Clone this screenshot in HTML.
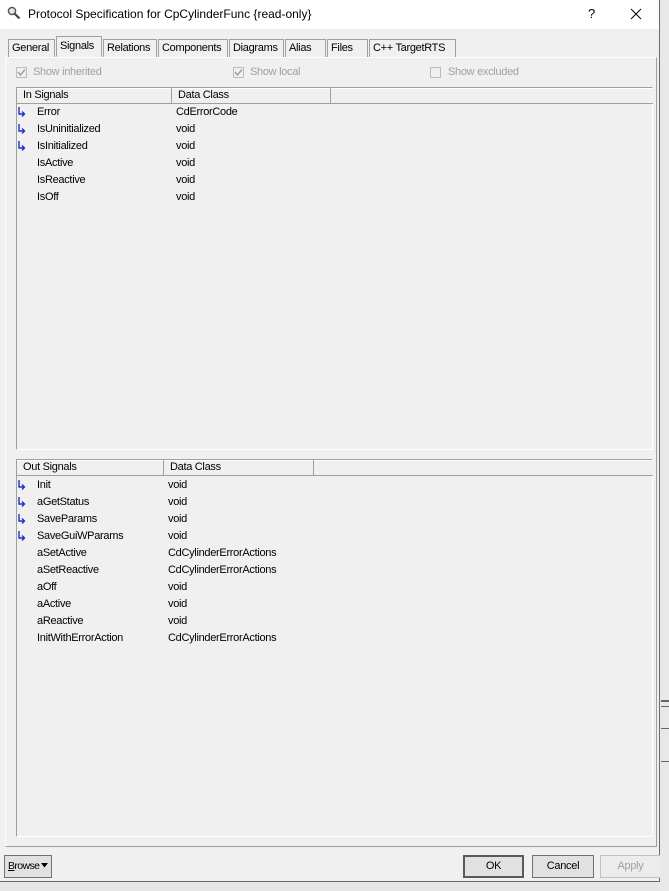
<!DOCTYPE html>
<html><head><style>
*{margin:0;padding:0;box-sizing:border-box}
html,body{width:669px;height:891px;overflow:hidden}
body{background:#e6e6e6;position:relative;font-family:"Liberation Sans",sans-serif;font-size:11px;color:#000;letter-spacing:-0.3px}
.a{position:absolute;white-space:nowrap}
#dlg{left:0;top:0;width:660px;height:882px;background:#f0f0f0;border-right:1px solid #6a6a6a;border-bottom:1px solid #6a6a6a}
#title{left:0;top:0;width:659px;height:29px;background:#fff}
.tab{position:absolute;top:39px;height:18px;border:1px solid #a0a0a0;border-bottom:none;background:#f0f0f0;padding:2px 3px 0;white-space:nowrap}
.list{position:absolute;left:16px;width:637px;border:1px solid #a0a0a0;border-right-color:#fff;border-bottom-color:#fff;background:#f0f0f0}
.hdr{position:absolute;top:0;height:16px;border-right:1px solid #a0a0a0;border-bottom:1px solid #a0a0a0;padding:1px 0 0 6px;background:#f0f0f0;box-shadow:inset 0 1px #fff}
.btn{position:absolute;top:855px;height:23px;border:1px solid #707070;background:#e1e1e1;text-align:center;line-height:21px;font-size:11px;white-space:nowrap}
.cb{position:absolute;top:67px;width:11px;height:11px;border:1px solid #bcbcbc;background:#f0f0f0}
.cbl{position:absolute;top:66px;color:#a0a0a0}
</style></head><body>
<div class="a" style="left:660px;top:0;width:9px;height:891px;background:#e8e8e8"></div>
<div class="a" style="left:661px;top:700px;width:8px;height:2px;background:#666"></div>
<div class="a" style="left:661px;top:706px;width:8px;height:1px;background:#666"></div>
<div class="a" style="left:661px;top:728px;width:8px;height:1px;background:#666"></div>
<div class="a" style="left:661px;top:761px;width:8px;height:1px;background:#666"></div>
<div class="a" id="dlg"></div>
<div class="a" id="title"></div>
<svg class="a" style="left:7px;top:6px" width="14" height="14" viewBox="0 0 14 14"><circle cx="5" cy="5" r="3.6" fill="#dfe8ef" stroke="#555" stroke-width="1.4"/><path d="M7.5 7.5L12.5 12.5" stroke="#444" stroke-width="2.2"/></svg>
<div class="a" style="left:28px;top:7px;font-size:12px;letter-spacing:0">Protocol Specification for CpCylinderFunc {read-only}</div>
<div class="a" style="left:588px;top:6px;font-size:13px">?</div>
<svg class="a" style="left:630px;top:8px" width="12" height="12"><path d="M1 1L11 11M11 1L1 11" stroke="#000" stroke-width="1"/></svg>
<div class="a" style="left:5px;top:57px;width:652px;height:790px;border:1px solid #fff;border-right-color:#a0a0a0;border-bottom-color:#a0a0a0"></div>
<div class="tab" style="left:8px;width:47px">General</div>
<div class="tab" style="left:56px;top:36px;height:21px;width:46px;background:#f0f0f0;border-bottom:1px solid #f0f0f0;padding-top:3px;z-index:2">Signals</div>
<div class="tab" style="left:103px;width:54px">Relations</div>
<div class="tab" style="left:158px;width:70px">Components</div>
<div class="tab" style="left:229px;width:55px">Diagrams</div>
<div class="tab" style="left:285px;width:41px">Alias</div>
<div class="tab" style="left:327px;width:41px">Files</div>
<div class="tab" style="left:369px;width:87px">C++ TargetRTS</div>
<div class="cb" style="left:16px"><svg width="9" height="9" style="position:absolute;left:0;top:0"><path d="M1 4L3.5 7L8 1.5" stroke="#a0a0a0" stroke-width="1.5" fill="none"/></svg></div>
<div class="cbl" style="left:33px">Show inherited</div>
<div class="cb" style="left:233px"><svg width="9" height="9" style="position:absolute;left:0;top:0"><path d="M1 4L3.5 7L8 1.5" stroke="#a0a0a0" stroke-width="1.5" fill="none"/></svg></div>
<div class="cbl" style="left:250px">Show local</div>
<div class="cb" style="left:430px"></div>
<div class="cbl" style="left:448px">Show excluded</div>

<div class="list" style="top:87px;height:363px">
<div class="hdr" style="left:0;width:155px">In Signals</div>
<div class="hdr" style="left:155px;width:159px">Data Class</div>
<div class="hdr" style="left:314px;width:322px;border-right:none"></div>
</div>
<div class="list" style="top:459px;height:378px">
<div class="hdr" style="left:0;width:147px">Out Signals</div>
<div class="hdr" style="left:147px;width:150px">Data Class</div>
<div class="hdr" style="left:297px;width:339px;border-right:none"></div>
</div>
<div id="rows"></div>
<script>
function rows(y0,c2,data){let h='';data.forEach((d,i)=>{let y=y0+i*17;
if(d[2])h+='<svg class="a" style="left:18px;top:'+(y+4)+'px" width="8" height="10"><path d="M1 0V7H6M4 4.5L6.5 7L4 9.5" stroke="#2030d0" stroke-width="1.4" fill="none"/></svg>';
h+='<div class="a" style="left:37px;top:'+(y+3)+'px">'+d[0]+'</div><div class="a" style="left:'+c2+'px;top:'+(y+3)+'px">'+d[1]+'</div>';});return h;}
document.getElementById('rows').innerHTML=rows(103,176,[["Error","CdErrorCode",1],["IsUninitialized","void",1],["IsInitialized","void",1],["IsActive","void"],["IsReactive","void"],["IsOff","void"]])+
rows(476,168,[["Init","void",1],["aGetStatus","void",1],["SaveParams","void",1],["SaveGuiWParams","void",1],["aSetActive","CdCylinderErrorActions"],["aSetReactive","CdCylinderErrorActions"],["aOff","void"],["aActive","void"],["aReactive","void"],["InitWithErrorAction","CdCylinderErrorActions"]]);
</script>
<div class="btn" style="left:4px;width:48px;text-align:left;padding-left:3px;font-size:10.5px;letter-spacing:-0.6px"><u>B</u>rowse</div>
<svg class="a" style="left:41px;top:863px" width="7" height="5"><path d="M0 0H7L3.5 4.5Z" fill="#000"/></svg>
<div class="btn" style="left:463px;width:61px;border:2px solid #5a5a5a;line-height:19px">OK</div>
<div class="btn" style="left:532px;width:62px">Cancel</div>
<div class="btn" style="left:600px;width:60px;color:#a0a0a0;border-color:#c0c0c0;border-right:none;background:#ececec">Apply</div>
</body></html>
